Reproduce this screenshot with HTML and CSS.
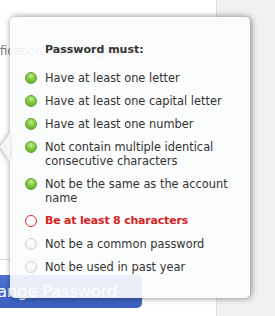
FILE: index.html
```html
<!DOCTYPE html>
<html>
<head>
  <meta charset="UTF-8">
  <title>Change Password</title>
  <link rel="stylesheet" href="styles.css">
</head>
<body>
  <div class="page">
    <div class="main">
      <p class="hint">fication. Confirm your</p>
      <hr class="rule">
      <button class="submit-btn">Change Password</button>
    </div>
    <div class="side"></div>

    <div class="popover">
      <span class="arrow"></span>
      <h3>Password must:</h3>
      <ul class="rules">
        <li class="ok"><span class="dot"></span><span>Have at least one letter</span></li>
        <li class="ok"><span class="dot"></span><span>Have at least one capital letter</span></li>
        <li class="ok"><span class="dot"></span><span>Have at least one number</span></li>
        <li class="ok"><span class="dot"></span><span>Not contain multiple identical consecutive characters</span></li>
        <li class="ok"><span class="dot"></span><span>Not be the same as the account name</span></li>
        <li class="fail"><span class="dot"></span><span>Be at least 8 characters</span></li>
        <li class="todo"><span class="dot"></span><span>Not be a common password</span></li>
        <li class="todo"><span class="dot"></span><span>Not be used in past year</span></li>
      </ul>
    </div>
  </div>
</body>
</html>
```

FILE: styles.css
```css
:root {
  --text-color: #333;
  --muted-color: #7a7a7a;
  --side-color: #f1f1f1;
  --popover-bg: rgba(251, 252, 252, 0.9);
  --error-color: #d8201f;
}

body {
  margin: 0;
  font-family: "DejaVu Sans", Verdana, sans-serif;
  color: var(--text-color);
  background-color: white;
}

.page {
  position: relative;
  display: flex;
  width: 275px;
  height: 316px;
  overflow: hidden;
}

.main {
  width: 216px;
  padding-top: 44px;
  box-sizing: border-box;
}

.side {
  flex-grow: 1;
  background-color: var(--side-color);
  border-left: 1px solid #e2e2e2;
}

.hint {
  margin: 0;
  font-size: 11.5px;
  line-height: 14px;
  color: var(--muted-color);
  white-space: nowrap;
}

.rule {
  margin: 201px 0 0;
  border: none;
  border-top: 1px solid #dcdcdc;
}

.submit-btn {
  display: block;
  margin: 15px 0 0 -49px;
  height: 33px;
  padding: 0 25px;
  border: none;
  border-radius: 5px;
  background: linear-gradient(#4d74d1, #3b5fc0);
  color: white;
  font-family: inherit;
  font-size: 16px;
  white-space: nowrap;
}

/* requirements popover */
.popover {
  position: absolute;
  left: 10px;
  top: 17px;
  width: 240px;
  height: 281px;
  box-sizing: border-box;
  padding: 26px 8px 0 15px;
  background-color: var(--popover-bg);
  border-radius: 5px;
  box-shadow: 1px 0 6px rgba(0, 0, 0, 0.5);
}

.arrow {
  position: absolute;
  left: -10px;
  top: 116px;
  width: 10px;
  height: 28px;
  filter: drop-shadow(-1px 0 2px rgba(0, 0, 0, 0.35));
}

.arrow:before {
  content: "";
  display: block;
  width: 10px;
  height: 28px;
  background-color: var(--popover-bg);
  clip-path: polygon(100% 0, 0 50%, 100% 100%);
}

.popover h3 {
  margin: 0 0 14px 20px;
  font-size: 11px;
  line-height: 14px;
  font-weight: bold;
}

.rules {
  list-style: none;
  margin: 0;
  padding: 0;
  display: flex;
  flex-direction: column;
  gap: 9px;
}

.rules li {
  display: flex;
  gap: 8px;
  font-size: 11.4px;
  line-height: 14px;
}

.dot {
  flex-shrink: 0;
  width: 12px;
  height: 12px;
  margin-top: 1px;
  border-radius: 50%;
  box-sizing: border-box;
}

.ok .dot {
  background: radial-gradient(circle at 50% 30%, #c6ec90 0, #82c940 45%, #58a522 100%);
  border: 1px solid #61a52f;
}

.fail {
  color: var(--error-color);
  font-weight: bold;
}

.fail span:last-child {
  font-size: 11px;
  letter-spacing: -0.2px;
}

.fail .dot {
  border: 1.5px solid #e3262b;
  background-color: white;
}

.todo .dot {
  border: 1px solid #d0d0d0;
  background: radial-gradient(circle at 50% 35%, #fff 0, #f0f0f0 100%);
}
```
